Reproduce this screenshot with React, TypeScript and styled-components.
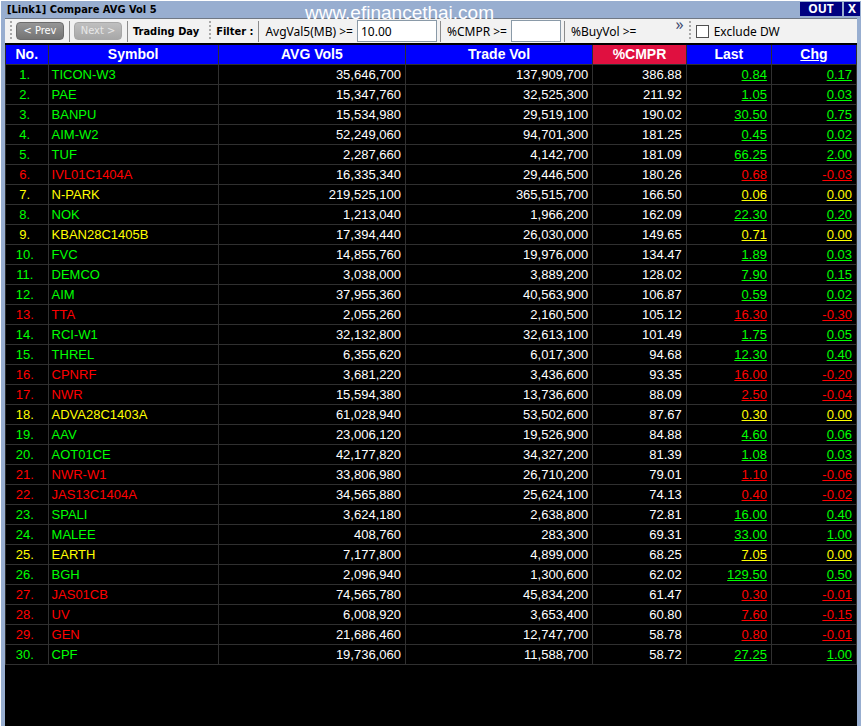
import styled, { createGlobalStyle } from "styled-components";

type Tone = "up" | "down" | "flat";

interface IStock {
    symbol: string;
    avg: string;
    vol: string;
    cmpr: string;
    last: string;
    chg: string;
}

const toneColors = {
    up: "#00ff00",
    down: "#ff0000",
    flat: "#ffff00",
};

const GlobalStyle = createGlobalStyle`
    * {
        box-sizing: border-box;
    }
    body {
        margin: 0;
        background-color: #ffffff;
    }
    button, input {
        font-family: inherit;
    }
`;

const Window = styled.main`
    display: flex;
    flex-direction: column;
    min-height: 100vh;
    margin-right: 3px;
    padding: 1px 1px 0 4px;
    background-color: #98aed0;
    border-left: 1px solid #ffffff;
    border-top: 1px solid #ffffff;
    font-family: "Noto Sans", Tahoma, sans-serif;
    font-size: 12px;
    color: #000000;
`;

const TitleBar = styled.header`
    position: relative;
    display: flex;
    justify-content: space-between;
    height: 16px;
`;

const Title = styled.h1`
    margin: 0;
    padding-left: 2px;
    font-family: "DejaVu Sans Condensed", Tahoma, sans-serif;
    font-size: 11px;
    line-height: 16px;
`;

const Watermark = styled.span`
    position: absolute;
    top: 0;
    left: 0;
    right: 66px;
    text-align: center;
    font-family: "Liberation Sans", Arial, sans-serif;
    font-size: 19px;
    line-height: 22px;
    color: #ffffff;
    pointer-events: none;
    z-index: 1;
`;

const WindowButtons = styled.div`
    display: flex;
    gap: 2px;
`;

const WindowButton = styled.button<{ $wide?: boolean }>`
    width: ${(props) => (props.$wide ? "42px" : "16px")};
    height: 14px;
    padding: 0;
    border: 0;
    background-color: #000080;
    color: #ffffff;
    font-size: 12px;
    font-weight: bold;
    line-height: 14px;
`;

const Toolbar = styled.div`
    display: flex;
    align-items: center;
    height: 25px;
    margin-right: 3px;
    background-color: #f2f2f2;
    border-top: 1px solid #707884;
    white-space: nowrap;
`;

const Grip = styled.span`
    width: 2px;
    height: 20px;
    margin-left: 5px;
    background: repeating-linear-gradient(#a8a8a8 0 2px, transparent 2px 4px);
`;

const Divider = styled.span`
    width: 1px;
    height: 21px;
    background-color: #8c8c8c;
`;

const NavButton = styled.button`
    height: 18px;
    width: 48px;
    margin: 0 5px 0 4px;
    padding: 0;
    border: 1px solid #6c6c6c;
    border-radius: 4px;
    background: linear-gradient(#969696, #747474);
    color: #ffffff;
    font-family: "DejaVu Sans Condensed", Verdana, sans-serif;
    font-size: 11px;
    line-height: 14px;
    &:disabled {
        border-color: #a8a8a8;
        background: linear-gradient(#c0c0c0, #a8a8a8);
        color: #e8e8e8;
    }
`;

const Caption = styled.span`
    padding: 0 5px;
    font-family: "DejaVu Sans Condensed", Tahoma, sans-serif;
    font-size: 11px;
    font-weight: bold;
`;

const Field = styled.label`
    display: flex;
    align-items: center;
    gap: 4px;
    padding: 0 3px 0 6px;
`;

const FilterInput = styled.input<{ $width: number }>`
    width: ${(props) => props.$width}px;
    height: 22px;
    padding: 0 3px;
    border: 1px solid #8a9aa8;
    background-color: #ffffff;
    font-size: 12px;
`;

const More = styled.button`
    align-self: flex-start;
    margin: 0 0 0 36px;
    padding: 0;
    border: 0;
    background: none;
    color: #404a70;
    font-size: 16px;
    line-height: 10px;
`;

const CheckLabel = styled.label`
    display: flex;
    align-items: center;
    gap: 5px;
    padding-left: 5px;
`;

const CheckBox = styled.input`
    appearance: none;
    width: 13px;
    height: 13px;
    margin: 0;
    border: 1px solid #505050;
    background-color: #ffffff;
    &:checked {
        background-color: #505050;
    }
`;

const Grid = styled.div`
    flex: 1;
    margin-right: 3px;
    padding-top: 2px;
    background-color: #000000;
`;

const Table = styled.table`
    width: 100%;
    table-layout: fixed;
    border-collapse: separate;
    border-spacing: 0;
    border-left: 1px solid #303030;
    font-family: "Liberation Sans", Arial, sans-serif;
    font-size: 13px;
    color: #ffffff;
`;

const Col = styled.col<{ $width: string }>`
    width: ${(props) => props.$width};
`;

const HeadCell = styled.th<{ $sorted?: boolean }>`
    height: 20px;
    padding: 0;
    border-right: 1px solid #303030;
    border-bottom: 1px solid #303030;
    background-color: ${(props) => (props.$sorted ? "#e01040" : "#0000ff")};
    font-size: 14px;
    line-height: 19px;
`;

const HeadLink = styled.a`
    color: inherit;
`;

const Row = styled.tr<{ $tone: Tone }>`
    --tone: ${(props) => toneColors[props.$tone]};
`;

const Cell = styled.td`
    height: 20px;
    padding: 0 4px 0 3px;
    border-right: 1px solid #303030;
    border-bottom: 1px solid #303030;
    line-height: 19px;
    text-align: right;
`;

const NumberCell = styled(Cell)`
    padding-left: 0;
    text-align: center;
    color: var(--tone);
`;

const SymbolCell = styled(Cell)`
    text-align: left;
    color: var(--tone);
`;

const PriceLink = styled.a`
    color: var(--tone);
    text-decoration-skip-ink: none;
`;

const stocks: IStock[] = [
    ["TICON-W3", "35,646,700", "137,909,700", "386.88", "0.84", "0.17"],
    ["PAE", "15,347,760", "32,525,300", "211.92", "1.05", "0.03"],
    ["BANPU", "15,534,980", "29,519,100", "190.02", "30.50", "0.75"],
    ["AIM-W2", "52,249,060", "94,701,300", "181.25", "0.45", "0.02"],
    ["TUF", "2,287,660", "4,142,700", "181.09", "66.25", "2.00"],
    ["IVL01C1404A", "16,335,340", "29,446,500", "180.26", "0.68", "-0.03"],
    ["N-PARK", "219,525,100", "365,515,700", "166.50", "0.06", "0.00"],
    ["NOK", "1,213,040", "1,966,200", "162.09", "22.30", "0.20"],
    ["KBAN28C1405B", "17,394,440", "26,030,000", "149.65", "0.71", "0.00"],
    ["FVC", "14,855,760", "19,976,000", "134.47", "1.89", "0.03"],
    ["DEMCO", "3,038,000", "3,889,200", "128.02", "7.90", "0.15"],
    ["AIM", "37,955,360", "40,563,900", "106.87", "0.59", "0.02"],
    ["TTA", "2,055,260", "2,160,500", "105.12", "16.30", "-0.30"],
    ["RCI-W1", "32,132,800", "32,613,100", "101.49", "1.75", "0.05"],
    ["THREL", "6,355,620", "6,017,300", "94.68", "12.30", "0.40"],
    ["CPNRF", "3,681,220", "3,436,600", "93.35", "16.00", "-0.20"],
    ["NWR", "15,594,380", "13,736,600", "88.09", "2.50", "-0.04"],
    ["ADVA28C1403A", "61,028,940", "53,502,600", "87.67", "0.30", "0.00"],
    ["AAV", "23,006,120", "19,526,900", "84.88", "4.60", "0.06"],
    ["AOT01CE", "42,177,820", "34,327,200", "81.39", "1.08", "0.03"],
    ["NWR-W1", "33,806,980", "26,710,200", "79.01", "1.10", "-0.06"],
    ["JAS13C1404A", "34,565,880", "25,624,100", "74.13", "0.40", "-0.02"],
    ["SPALI", "3,624,180", "2,638,800", "72.81", "16.00", "0.40"],
    ["MALEE", "408,760", "283,300", "69.31", "33.00", "1.00"],
    ["EARTH", "7,177,800", "4,899,000", "68.25", "7.05", "0.00"],
    ["BGH", "2,096,940", "1,300,600", "62.02", "129.50", "0.50"],
    ["JAS01CB", "74,565,780", "45,834,200", "61.47", "0.30", "-0.01"],
    ["UV", "6,008,920", "3,653,400", "60.80", "7.60", "-0.15"],
    ["GEN", "21,686,460", "12,747,700", "58.78", "0.80", "-0.01"],
    ["CPF", "19,736,060", "11,588,700", "58.72", "27.25", "1.00"],
].map(([symbol, avg, vol, cmpr, last, chg]) => ({ symbol, avg, vol, cmpr, last, chg }));

const getTone = (chg: string): Tone => {
    const value = Number(chg);
    if (value === 0) return "flat";
    return value > 0 ? "up" : "down";
};

function App() {
    return (
        <>
            <GlobalStyle />
            <Window>
                <TitleBar>
                    <Title>[Link1] Compare AVG Vol 5</Title>
                    <Watermark>www.efinancethai.com</Watermark>
                    <WindowButtons>
                        <WindowButton $wide>OUT</WindowButton>
                        <WindowButton>X</WindowButton>
                    </WindowButtons>
                </TitleBar>
                <Toolbar>
                    <Grip />
                    <NavButton>&lt; Prev</NavButton>
                    <Divider />
                    <NavButton disabled>Next &gt;</NavButton>
                    <Divider />
                    <Caption>Trading Day</Caption>
                    <Grip />
                    <Caption>Filter :</Caption>
                    <Divider />
                    <Field>
                        AvgVal5(MB) &gt;=
                        <FilterInput $width={80} defaultValue="10.00" />
                    </Field>
                    <Divider />
                    <Field>
                        %CMPR &gt;=
                        <FilterInput $width={50} />
                    </Field>
                    <Divider />
                    <Field>%BuyVol &gt;=</Field>
                    <More>»</More>
                    <Grip />
                    <CheckLabel>
                        <CheckBox type="checkbox" />
                        Exclude DW
                    </CheckLabel>
                </Toolbar>
                <Grid>
                    <Table>
                        <colgroup>
                            <Col $width="5%" />
                            <Col $width="20%" />
                            <Col $width="22%" />
                            <Col $width="22%" />
                            <Col $width="11%" />
                            <Col $width="10%" />
                            <Col $width="10%" />
                        </colgroup>
                        <thead>
                            <tr>
                                <HeadCell>No.</HeadCell>
                                <HeadCell>Symbol</HeadCell>
                                <HeadCell>AVG Vol5</HeadCell>
                                <HeadCell>Trade Vol</HeadCell>
                                <HeadCell $sorted>%CMPR</HeadCell>
                                <HeadCell>Last</HeadCell>
                                <HeadCell>
                                    <HeadLink href="#chg">Chg</HeadLink>
                                </HeadCell>
                            </tr>
                        </thead>
                        <tbody>
                            {stocks.map((stock, index) => (
                                <Row key={stock.symbol} $tone={getTone(stock.chg)}>
                                    <NumberCell>{index + 1}.</NumberCell>
                                    <SymbolCell>{stock.symbol}</SymbolCell>
                                    <Cell>{stock.avg}</Cell>
                                    <Cell>{stock.vol}</Cell>
                                    <Cell>{stock.cmpr}</Cell>
                                    <Cell>
                                        <PriceLink href={`#${stock.symbol}`}>{stock.last}</PriceLink>
                                    </Cell>
                                    <Cell>
                                        <PriceLink href={`#${stock.symbol}`}>{stock.chg}</PriceLink>
                                    </Cell>
                                </Row>
                            ))}
                        </tbody>
                    </Table>
                </Grid>
            </Window>
        </>
    );
}

export default App;
